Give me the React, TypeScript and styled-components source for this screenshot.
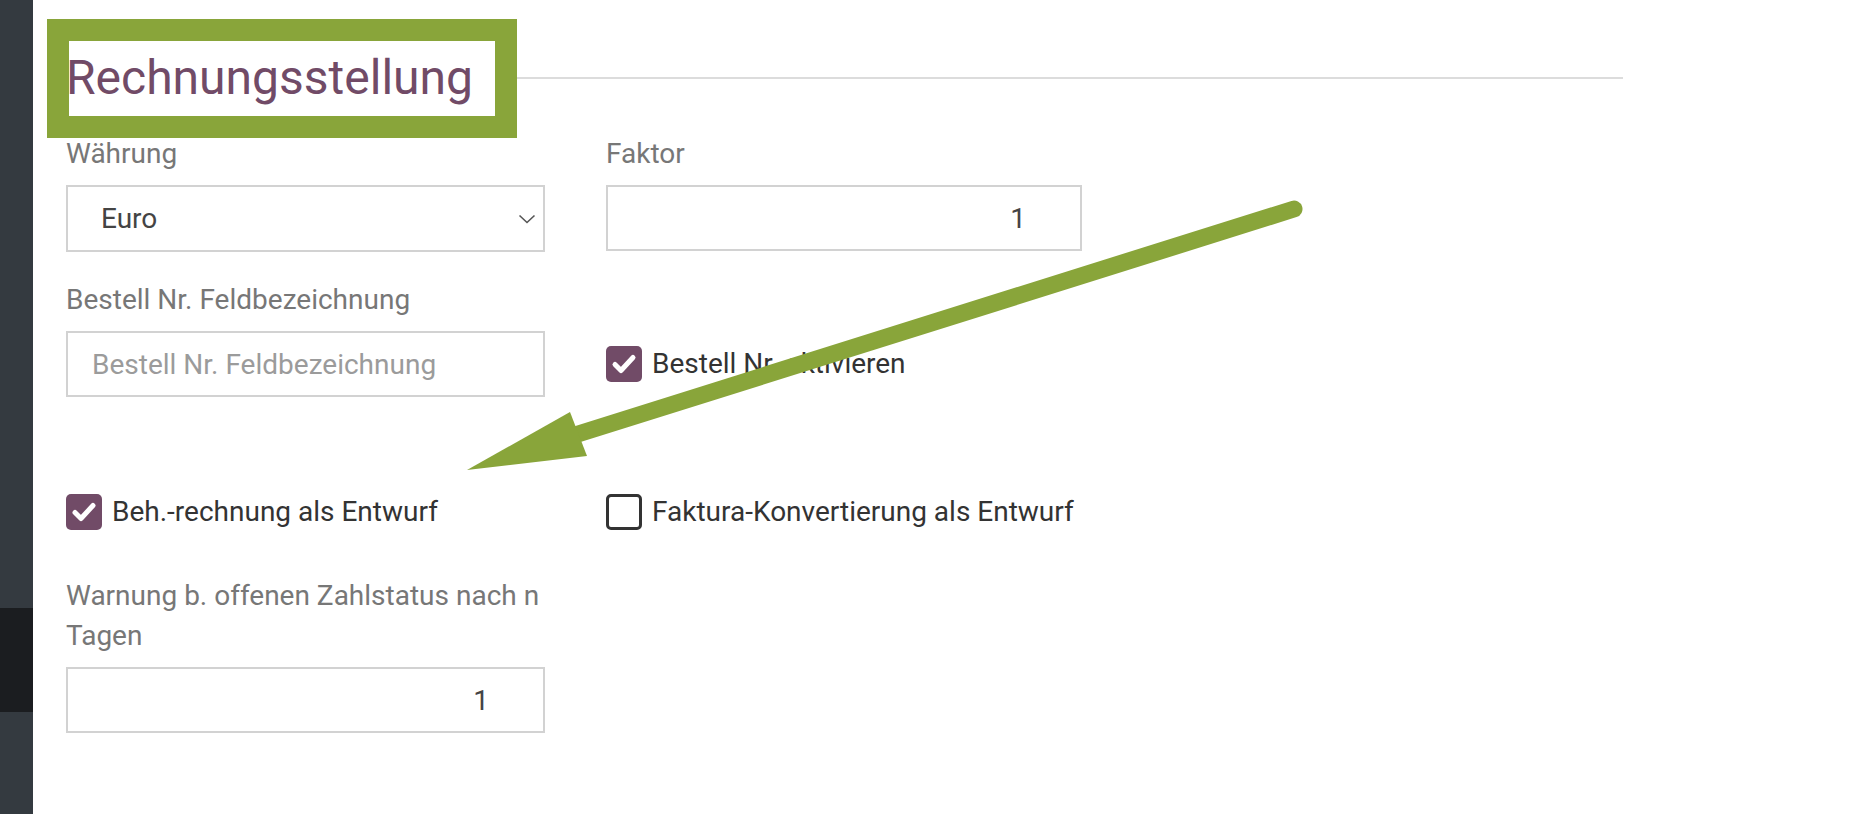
import React from 'react';
import styled, { createGlobalStyle } from 'styled-components';

const GlobalStyle = createGlobalStyle`
  html, body {
    margin: 0;
    padding: 0;
    background: #fff;
  }

  body {
    font-family: Roboto, "Liberation Sans", sans-serif;
  }

  * {
    box-sizing: border-box;
  }
`;

const Page = styled.div`
  position: relative;
  display: flex;
  width: 1864px;
  height: 814px;
  overflow: hidden;
  background: #fff;
`;

const Sidebar = styled.div`
  display: flex;
  flex-direction: column;
  flex: 0 0 33px;
  padding-top: 608px;
  background: #343a40;
`;

const SidebarItem = styled.div`
  height: 104px;
  background: #1b1d20;
`;

const Main = styled.main`
  flex: 1;
  padding: 50px 0 0 33px;
`;

const Form = styled.div`
  width: 1557px;
`;

const SectionHeader = styled.div`
  display: flex;
  align-items: center;
  margin-bottom: 28px;
`;

const Title = styled.h2`
  margin: 0;
  font-size: 48px;
  line-height: 56px;
  font-weight: 400;
  color: #714b67;
  white-space: nowrap;
`;

const Separator = styled.div`
  flex: 1;
  height: 2px;
  margin-left: 22px;
  background: #dcdcdc;
`;

const Row = styled.div<{ $top?: number }>`
  display: grid;
  grid-template-columns: 479px 476px;
  column-gap: 61px;
  margin-top: ${(p) => p.$top ?? 0}px;
`;

const Field = styled.div`
  display: flex;
  flex-direction: column;
`;

const Label = styled.label`
  margin-bottom: 11px;
  font-size: 28px;
  line-height: 40px;
  color: #777;
`;

const inputBase = `
  width: 100%;
  height: 67px;
  border: 2px solid #d2d2d2;
  border-radius: 0;
  background: #fff;
  font-family: Roboto, "Liberation Sans", sans-serif;
  font-size: 28px;
  color: #444;
  outline: none;
`;

const SelectBox = styled.div`
  ${inputBase}
  display: flex;
  align-items: center;
  justify-content: space-between;
  padding: 0 7px 0 33px;
`;

const TextInput = styled.input<{ $align?: 'left' | 'right' }>`
  ${inputBase}
  height: 66px;
  padding: ${(p) => (p.$align === 'right' ? '0 54px 0 24px' : '0 24px')};
  text-align: ${(p) => p.$align ?? 'left'};

  &::placeholder {
    color: #9b9b9b;
  }
`;

const CheckCell = styled.div<{ $end?: boolean }>`
  display: flex;
  align-items: center;
  align-self: ${(p) => (p.$end ? 'end' : 'start')};
  height: ${(p) => (p.$end ? '66px' : '36px')};
`;

const Box = styled.span<{ $checked?: boolean }>`
  display: flex;
  align-items: center;
  justify-content: center;
  flex: 0 0 36px;
  width: 36px;
  height: 36px;
  border-radius: 5px;
  border: ${(p) => (p.$checked ? 'none' : '3px solid #333')};
  background: ${(p) => (p.$checked ? '#714b67' : '#fff')};
`;

const CheckText = styled.span`
  margin-left: 10px;
  font-size: 28px;
  line-height: 36px;
  color: #333;
  white-space: nowrap;
`;

const Highlight = styled.div`
  position: absolute;
  left: 47px;
  top: 19px;
  width: 470px;
  height: 119px;
  border: 22px solid #89a53a;
  pointer-events: none;
`;

const ArrowLayer = styled.svg`
  position: absolute;
  left: 0;
  top: 0;
  pointer-events: none;
`;

const Chevron = () => (
  <svg width="18" height="10" viewBox="0 0 18 10">
    <polyline points="1.5,1.5 9,8.5 16.5,1.5" fill="none" stroke="#555" strokeWidth="1.6" />
  </svg>
);

const Checkbox = ({ checked, label, end }: { checked?: boolean; label: string; end?: boolean }) => (
  <CheckCell $end={end}>
    <Box $checked={checked}>
      {checked && (
        <svg width="28" height="28" viewBox="0 0 28 28">
          <polyline
            points="5,14.5 11,20.5 23,7.5"
            fill="none"
            stroke="#fff"
            strokeWidth="5"
            strokeLinecap="round"
            strokeLinejoin="round"
          />
        </svg>
      )}
    </Box>
    <CheckText>{label}</CheckText>
  </CheckCell>
);

const App = () => {
  return (
    <>
      <GlobalStyle />
      <Page>
        <Sidebar>
          <SidebarItem />
        </Sidebar>
        <Main>
          <Form>
            <SectionHeader>
              <Title>Rechnungsstellung</Title>
              <Separator />
            </SectionHeader>

            <Row>
              <Field>
                <Label>Währung</Label>
                <SelectBox>
                  <span>Euro</span>
                  <Chevron />
                </SelectBox>
              </Field>
              <Field>
                <Label>Faktor</Label>
                <TextInput $align="right" defaultValue="1" />
              </Field>
            </Row>

            <Row $top={28}>
              <Field>
                <Label>Bestell Nr. Feldbezeichnung</Label>
                <TextInput placeholder="Bestell Nr. Feldbezeichnung" />
              </Field>
              <Checkbox checked end label="Bestell Nr. aktivieren" />
            </Row>

            <Row $top={97}>
              <Checkbox checked label="Beh.-rechnung als Entwurf" />
              <Checkbox label="Faktura-Konvertierung als Entwurf" />
            </Row>

            <Row $top={46}>
              <Field>
                <Label>Warnung b. offenen Zahlstatus nach n Tagen</Label>
                <TextInput $align="right" defaultValue="1" />
              </Field>
            </Row>
          </Form>
        </Main>

        <Highlight />
        <ArrowLayer width="1864" height="814" viewBox="0 0 1864 814">
          <line x1="1294" y1="209" x2="578" y2="434" stroke="#89a53a" strokeWidth="17" strokeLinecap="round" />
          <polygon points="467,470 570,412 587,456" fill="#89a53a" />
        </ArrowLayer>
      </Page>
    </>
  );
};

export default App;
